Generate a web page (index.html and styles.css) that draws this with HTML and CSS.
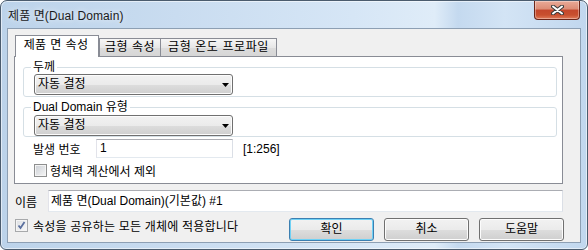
FILE: index.html
```html
<!DOCTYPE html>
<html lang="ko">
  <head>
    <meta charset="UTF-8" />
    <title>제품 면(Dual Domain)</title>
    <link rel="stylesheet" href="styles.css">
  </head>
  <body>
    <div class="window">
      <div class="titlebar">
        <span class="title">제품 면(Dual Domain)</span>
        <div class="close-btn">
          <svg width="13" height="10" viewBox="0 0 13 10">
            <path d="M2 1.5 L11 8.5 M11 1.5 L2 8.5" stroke="#3b3b3b" stroke-width="4" stroke-linecap="round" fill="none" />
            <path d="M2 1.5 L11 8.5 M11 1.5 L2 8.5" stroke="#ffffff" stroke-width="2" stroke-linecap="round" fill="none" />
          </svg>
        </div>
      </div>

      <div class="client">
        <!-- 탭 -->
        <div class="tabs">
          <div class="tab active">제품 면 속성</div>
          <div class="tab mold">금형 속성</div>
          <div class="tab profile">금형 온도 프로파일</div>
        </div>

        <div class="tab-page">
          <fieldset class="group">
            <legend>두께</legend>
            <div class="combo">
              <span>자동 결정</span>
              <svg class="arrow" width="7" height="4" viewBox="0 0 7 4"><polygon points="0,0 7,0 3.5,4" fill="#000" /></svg>
            </div>
          </fieldset>

          <fieldset class="group second">
            <legend>Dual Domain 유형</legend>
            <div class="combo">
              <span>자동 결정</span>
              <svg class="arrow" width="7" height="4" viewBox="0 0 7 4"><polygon points="0,0 7,0 3.5,4" fill="#000" /></svg>
            </div>
          </fieldset>

          <div class="field-row">
            <span class="field-label">발생 번호</span>
            <div class="textbox small">1</div>
            <span class="range">[1:256]</span>
          </div>

          <div class="check-row inner">
            <span class="checkbox"></span>
            <span>형체력 계산에서 제외</span>
          </div>
        </div>

        <div class="name-row">
          <span class="name-label">이름</span>
          <div class="textbox wide">제품 면(Dual Domain)(기본값) #1</div>
        </div>

        <div class="bottom-row">
          <div class="check-row apply">
            <span class="checkbox checked">
              <svg width="9" height="9" viewBox="0 0 9 9"><path d="M1.5 4.5 L3.5 7 L7.5 1" stroke="#5a6f9e" stroke-width="1.8" fill="none" /></svg>
            </span>
            <span>속성을 공유하는 모든 개체에 적용합니다</span>
          </div>
          <div class="buttons">
            <div class="button default">확인</div>
            <div class="button">취소</div>
            <div class="button">도움말</div>
          </div>
        </div>
      </div>
    </div>
  </body>
</html>
```

FILE: styles.css
```css
body {
  margin: 0;
  background-color: #fff;
  font-family: "Liberation Sans", "Noto Sans CJK KR", sans-serif;
  font-size: 12px;
  color: #000;
}
.window {
  width: 588px;
  height: 250px;
  box-sizing: border-box;
  border: 1px solid #4b5c6e;
  border-radius: 7px 7px 6px 6px;
  padding: 0 6px 6px;
  display: flex;
  flex-direction: column;
  overflow: hidden;
  background: linear-gradient(to right, #bcd3ea 0%, #c9dcf0 30%, #d6e6f6 60%, #dfecf8 74%, #c4d9ef 78%, #d3e4f5 86%, #c1d7ee 100%);
  box-shadow: inset 0 0 0 1px rgba(255, 255, 255, 0.55);
}
.titlebar {
  height: 27px;
  display: flex;
  justify-content: space-between;
  align-items: flex-start;
}
.title {
  margin: 7px 0 0 1px;
  line-height: 16px;
  letter-spacing: 0.1px;
  color: #1b1b1b;
  text-shadow: 0 0 6px rgba(255, 255, 255, 0.9);
}
.close-btn {
  width: 46px;
  height: 19px;
  box-sizing: border-box;
  margin-right: 1px;
  border: 1px solid #6b2619;
  border-top: none;
  border-radius: 0 0 4px 4px;
  background: linear-gradient(#e9aa98 0%, #dc8c75 45%, #c4472c 50%, #c8502f 78%, #e07b5a 100%);
  box-shadow: inset 0 0 0 1px rgba(255, 255, 255, 0.35);
  display: flex;
  align-items: center;
  justify-content: center;
}
.client {
  flex: 1;
  background-color: #f0f0f0;
  border: 1px solid #8d9fb3;
  padding: 6px 17px 0 6px;
  display: flex;
  flex-direction: column;
}
/* 탭 */
.tabs {
  display: flex;
  align-items: flex-end;
  height: 22px;
  padding-left: 1px;
  position: relative;
  z-index: 1;
}
.tab {
  height: 18px;
  box-sizing: border-box;
  line-height: 17px;
  text-align: center;
  margin-bottom: 1px;
  border: 1px solid #898c95;
  border-bottom: none;
  background: linear-gradient(#f6f6f6 0%, #e7e7e7 50%, #dcdcdc 51%, #d6d6d6 100%);
}
.tab.active {
  width: 84px;
  height: 22px;
  line-height: 19px;
  margin: 0;
  padding-right: 2px;
  letter-spacing: 0.4px;
  background: #fff;
}
.tab.mold {
  width: 62px;
  letter-spacing: 0.5px;
}
.tab.profile {
  width: 117px;
  margin-left: -1px;
  letter-spacing: 0.6px;
}
.tab-page {
  height: 128px;
  box-sizing: border-box;
  margin-top: -1px;
  padding: 4px 5px 0 8px;
  border: 1px solid #898c95;
  background-color: #fff;
}
.group {
  margin: 0;
  padding: 1px 0 1px 10px;
  border: 1px solid #d5dfe5;
  border-radius: 3px;
}
.group.second {
  margin-top: 4px;
  padding: 2px 0 0 10px;
}
.group legend {
  padding: 0 2px;
  margin-left: -3px;
  line-height: 12px;
}
.combo {
  width: 199px;
  height: 21px;
  box-sizing: border-box;
  padding: 0 3px 0 3px;
  border: 1px solid #707070;
  border-radius: 3px;
  background: linear-gradient(#f2f2f2 0%, #ebebeb 50%, #dddddd 51%, #cfcfcf 100%);
  box-shadow: inset 0 0 0 1px #fcfcfc;
  display: flex;
  align-items: center;
  justify-content: space-between;
  line-height: 19px;
}
.field-row {
  display: flex;
  align-items: center;
  margin: 2px 0 0 10px;
}
.field-label {
  width: 63px;
}
.textbox {
  height: 19px;
  box-sizing: border-box;
  padding-left: 3px;
  line-height: 17px;
  border: 1px solid #dbdfe6;
  border-top-color: #abadb3;
  border-left-color: #e2e3ea;
  border-bottom-color: #e3e9ef;
  background-color: #fff;
}
.textbox.small {
  width: 137px;
}
.range {
  margin-left: 10px;
}
.check-row {
  display: flex;
  align-items: center;
  gap: 3px;
}
.check-row.inner {
  margin: 4px 0 0 11px;
}
.checkbox {
  width: 13px;
  height: 13px;
  box-sizing: border-box;
  border: 1px solid #8e8f8f;
  background: linear-gradient(135deg, #cbcfd5 0%, #f6f6f6 100%);
  box-shadow: inset 0 0 0 1px #f4f4f4;
  display: flex;
  align-items: center;
  justify-content: center;
}
.checkbox.checked {
  border-color: #a7a9ab;
  background: linear-gradient(135deg, #dcdfe3 0%, #f8f8f8 100%);
}
.name-row {
  display: flex;
  align-items: center;
  margin-top: 6px;
}
.name-label {
  width: 33px;
  padding-left: 1px;
}
.textbox.wide {
  flex: 1;
  height: 22px;
  line-height: 20px;
  padding-left: 2px;
}
.bottom-row {
  display: flex;
  justify-content: space-between;
  align-items: flex-start;
  margin-top: 6px;
}
.check-row.apply {
  gap: 5px;
  margin: -1px 0 0 1px;
  letter-spacing: 0.2px;
}
.buttons {
  display: flex;
  gap: 10px;
  margin-right: -1px;
}
.button {
  width: 85px;
  height: 23px;
  box-sizing: border-box;
  border: 1px solid #707070;
  border-radius: 3px;
  background: linear-gradient(#f2f2f2 0%, #ebebeb 50%, #dddddd 51%, #cfcfcf 100%);
  box-shadow: inset 0 0 0 1px #fcfcfc;
  text-align: center;
  line-height: 21px;
}
.button.default {
  border-color: #3c7fb1;
  box-shadow: inset 0 0 0 1px #6fd1f5;
}
```
